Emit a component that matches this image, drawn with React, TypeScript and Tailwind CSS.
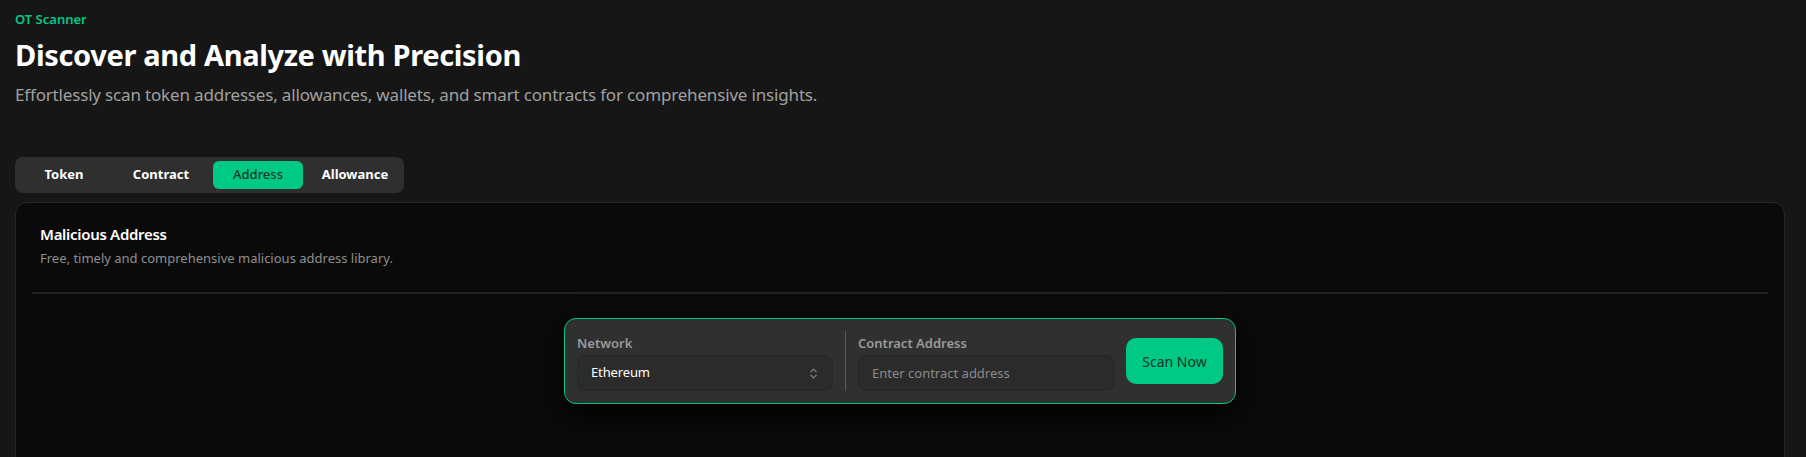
import React from "react";
import { ChevronsUpDown } from "lucide-react";

const tabs = ["Token", "Contract", "Address", "Allowance"];

export default function App() {
  return (
    <div className="min-h-screen bg-[#161616] pl-[15px] pr-[21px] pt-[9px] pb-10 font-['Noto_Sans',sans-serif]">
      <p className="text-[13px] leading-5 font-semibold text-[#00c985]">OT Scanner</p>
      <h1 className="mt-2 text-[29px] leading-9 font-bold tracking-[-0.012em] text-white">Discover and Analyze with Precision</h1>
      <p className="mt-2 text-[17px] leading-7 tracking-[-0.01em] text-[#a0a0a0]">
        Effortlessly scan token addresses, allowances, wallets, and smart contracts for comprehensive insights.
      </p>

      <div className="mt-12 inline-grid grid-cols-4 gap-[7px] rounded-lg bg-[#2f2f2f] p-1">
        {tabs.map((t) => (
          <button
            key={t}
            className={
              t === "Address"
                ? "h-7 w-[90px] rounded-md bg-[#00c985] text-[13px] font-medium text-[#163a2b]"
                : "h-7 w-[90px] rounded-md text-[13px] font-bold text-white"
            }
          >
            {t}
          </button>
        ))}
      </div>

      <div className="mt-[9px] rounded-xl border border-[#262626] bg-[#0a0a0a] pb-40">
        <div className="px-6 pt-[19px] pb-6">
          <h2 className="text-[15px] leading-6 font-semibold tracking-[-0.02em] text-white">Malicious Address</h2>
          <p className="mt-0.5 text-[13px] leading-5 text-[#8f8f8f]">Free, timely and comprehensive malicious address library.</p>
        </div>
        <div className="mx-4 h-[2px] bg-[#222222]" />
        <div className="pt-6">
          <div className="mx-auto flex max-w-2xl items-center gap-3 rounded-xl border border-[#00c985] bg-[#303030] p-3 shadow-[0_10px_28px_rgba(0,0,0,0.85)]">
            <div className="w-[256px]">
              <div className="text-[13px] leading-6 font-semibold text-[#9a9a9a]">Network</div>
              <button className="flex h-9 w-full items-center justify-between rounded-lg border border-[#262626] bg-[#2b2b2b] pl-[13px] pr-[12px] text-[13px] tracking-[-0.01em] text-white">
                <span>Ethereum</span>
                <ChevronsUpDown size={13} className="text-[#8a8a8a]" />
              </button>
            </div>
            <div className="w-px self-stretch bg-[#5a5a5a]" />
            <div className="flex-1">
              <div className="text-[13px] leading-6 font-semibold text-[#9a9a9a]">Contract Address</div>
              <input
                placeholder="Enter contract address"
                className="h-9 w-full rounded-lg border border-[#262626] bg-[#2b2b2b] px-[13px] text-[13px] text-white placeholder:text-[#8a8a8a] outline-none"
              />
            </div>
            <button className="h-[46px] w-[97px] shrink-0 rounded-[10px] bg-[#00c985] text-[14px] text-[#143326]">
              Scan Now
            </button>
          </div>
        </div>
      </div>
    </div>
  );
}
